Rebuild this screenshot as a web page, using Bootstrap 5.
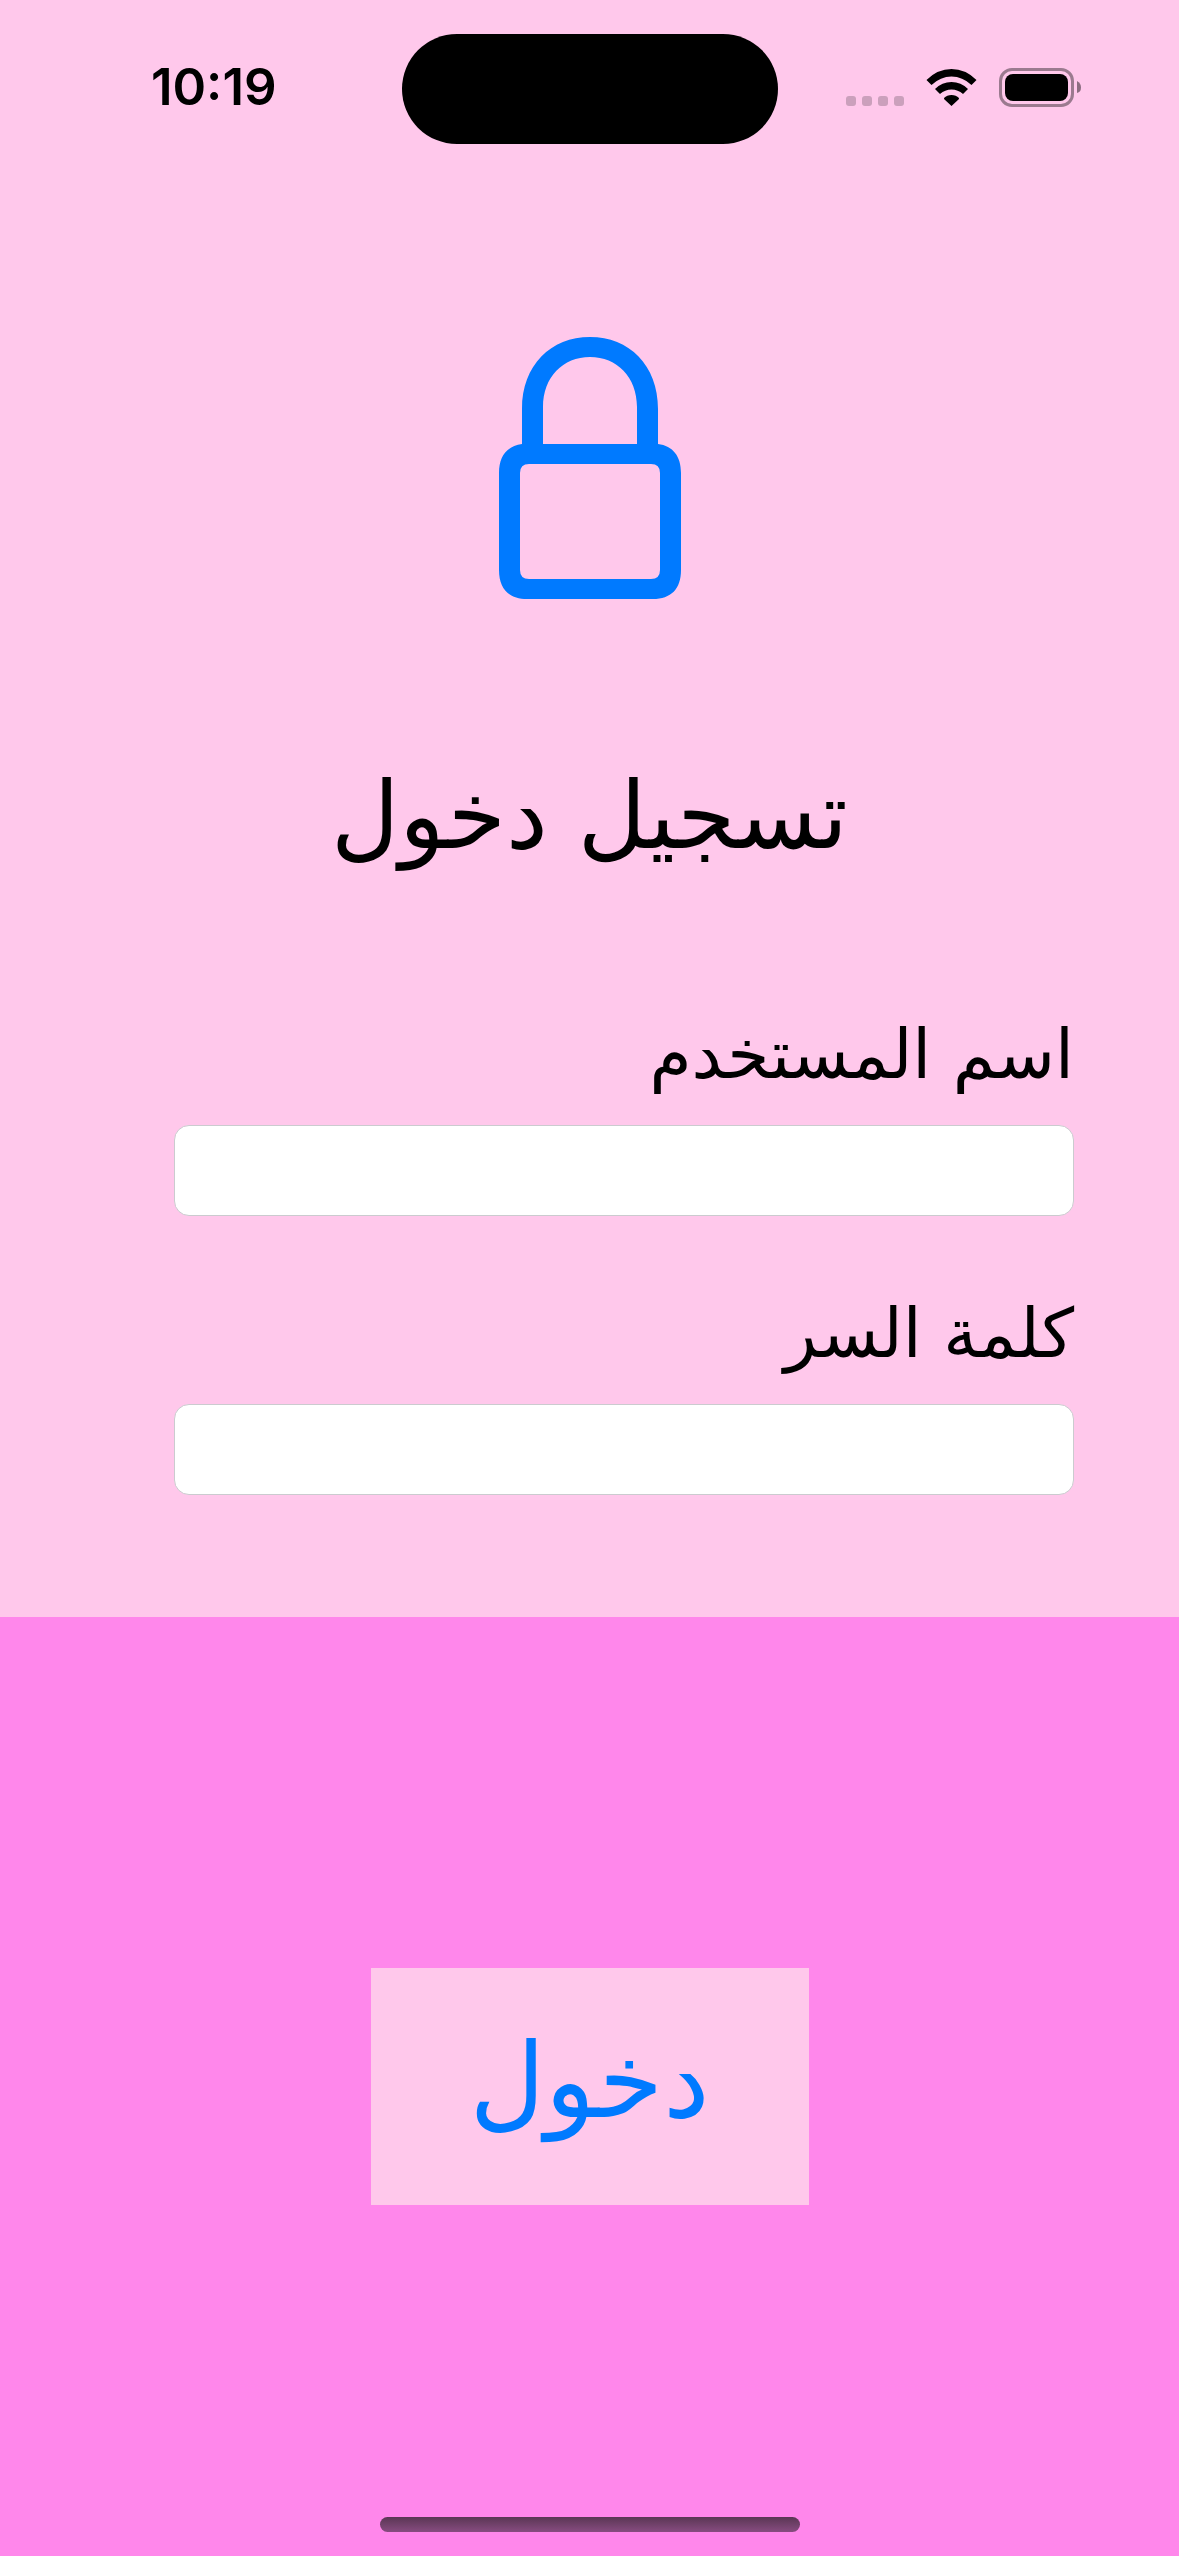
<!DOCTYPE html>
<html lang="ar" dir="rtl">
<head>
<meta charset="utf-8">
<meta name="viewport" content="width=device-width, initial-scale=1">
<title>تسجيل دخول</title>
<link href="https://cdn.jsdelivr.net/npm/bootstrap@5.3.0/dist/css/bootstrap.min.css" rel="stylesheet">
<style>
  body { background: #ff87eb; color: #000; font-family: "DejaVu Sans", sans-serif; }
  .status-bar { display: grid; grid-template-columns: 1fr 376px 1fr; padding-top: 34px; }
  .clock { font: 600 51px/60px Inter, sans-serif; padding: 0 0 4px 26px; }
  .island { height: 110px; border-radius: 55px; background: #000; }
  .status-icons { gap: 22px; padding: 0 98px 3px 0; }
  .upper { background: #ffc8eb; padding-bottom: 122px; }
  .lock-icon { margin-top: 193px; color: #007aff; }
  .screen-title { font-size: 94px; line-height: 120px; font-weight: 400; margin: 157px 0 135px; }
  .login-form { display: grid; gap: 74px; padding: 0 105px 0 174px; }
  .field-label { font-size: 68px; line-height: 88px; margin: 0 0 26px; }
  .field-box { height: 91px; border: 1px solid #cbcbcf; border-radius: 15px; background: #fff; font-size: 48px; }
  .enter-btn { width: 438px; height: 237px; background: #ffc8eb; color: #007aff; border: 0; border-radius: 0; font-size: 104px; line-height: 120px; padding: 0 0 12px; margin-top: 351px; }
  .enter-btn:hover { background: #ffb9e6; color: #007aff; }
  .home-bar { width: 420px; height: 15px; border-radius: 8px; background: linear-gradient(#5a3654, #874c80); margin-bottom: 24px; }
</style>
</head>
<body>
<div class="min-vh-100 d-flex flex-column">
  <div class="upper">
    <header class="status-bar align-items-center" dir="ltr">
      <div class="clock text-center">10:19</div>
      <div class="island"></div>
      <div class="status-icons d-flex justify-content-end align-items-end">
        <svg width="58" height="11" viewBox="0 0 58 11" fill="#cba0bc" aria-hidden="true"><rect width="10" height="10" rx="3"/><rect x="16" width="10" height="10" rx="3"/><rect x="32" width="10" height="10" rx="3"/><rect x="48" width="10" height="10" rx="3"/></svg>
        <svg width="51" height="38" viewBox="0 0 51 38" aria-hidden="true"><path d="M.5 11Q11.500 0 25.500 0T50.500 11L45.500 16Q36.500 7.500 25.500 7.500T5.500 16ZM9 20Q16 13 25.500 13T42 20L37 25Q32 20.500 25.500 20.500T14 25ZM18 29Q21 26 25.500 26T33 29Q33 30 32.500 30.500L25.500 37L18.500 30.500Q18 30 18 29Z"/></svg>
        <svg width="82" height="39" viewBox="0 0 82 39" aria-hidden="true"><rect x="1.500" y="1.500" width="72" height="36" rx="11.500" fill="none" stroke="#9b7a8f" stroke-width="3"/><rect x="6" y="6" width="63" height="27" rx="8"/><path d="M78 13Q82 15 82 19.500T78 25Z" fill="#8c6d81"/></svg>
      </div>
    </header>
    <svg class="lock-icon d-block mx-auto" width="182" height="262" viewBox="0 0 182 262" aria-hidden="true"><path fill="currentColor" fill-rule="evenodd" d="M23 107V72C23 28 52 0 91 0S159 28 159 72V107C174 109 182 119 182 136V233C182 252 172 262 154 262H28C10 262 0 252 0 233V136C0 119 8 109 23 107ZM44 107H138V70C138 40 118 20 91 20S44 40 44 70ZM30 127Q21 127 21 136V233Q21 242 30 242H152Q161 242 161 233V136Q161 127 152 127Z"/></svg>
    <h1 class="screen-title text-center">تسجيل دخول</h1>
    <form class="login-form" id="login">
      <div>
        <label class="field-label d-block" for="user">اسم المستخدم</label>
        <input class="field-box form-control" id="user" type="text" autocomplete="username">
      </div>
      <div>
        <label class="field-label d-block" for="pass">كلمة السر</label>
        <input class="field-box form-control" id="pass" type="password" autocomplete="current-password">
      </div>
    </form>
  </div>
  <button class="enter-btn btn mx-auto" type="submit" form="login">دخول</button>
  <div class="home-bar mx-auto mt-auto"></div>
</div>
<script src="https://cdn.jsdelivr.net/npm/bootstrap@5.3.0/dist/js/bootstrap.bundle.min.js"></script>
</body>
</html>
